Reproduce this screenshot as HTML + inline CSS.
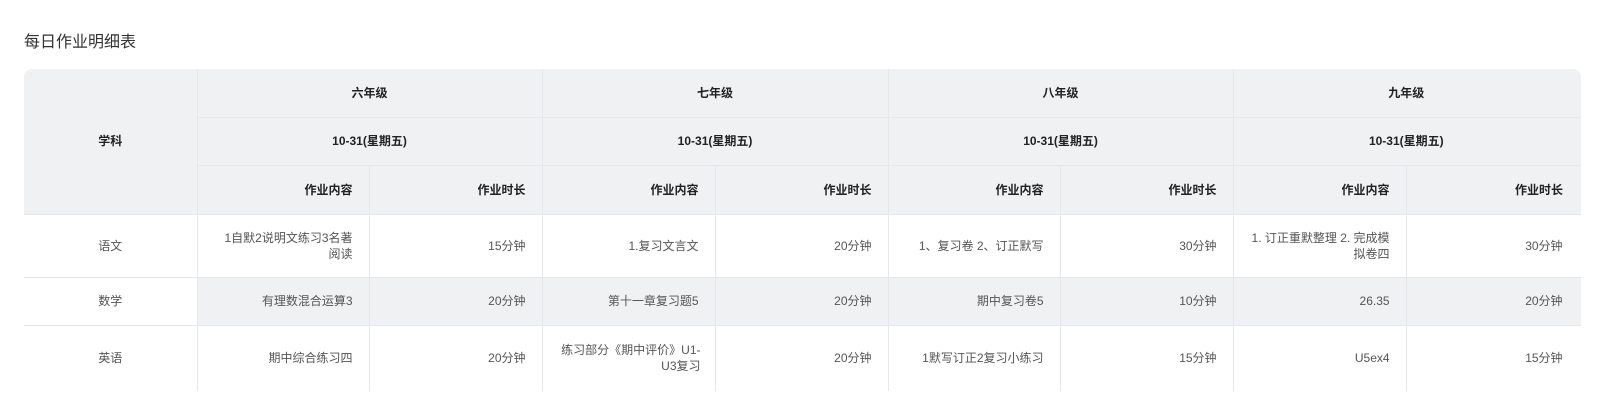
<!DOCTYPE html>
<html><head><meta charset="utf-8"><style>
body{margin:0;background:#fff;font-family:"Liberation Sans","Noto Sans CJK SC",sans-serif;width:1605px;height:416px;overflow:hidden;position:relative}
.title{position:absolute;left:24px;top:28px;font-size:16px;color:#333}
.wrap{position:absolute;left:24px;top:69px;width:1557px;height:322px;background:#f0f1f3;border-radius:8px 8px 0 0;overflow:hidden}
table{border-collapse:collapse;table-layout:fixed;position:absolute;left:0;top:0;font-size:12px;width:1557px}
td,th{padding:0 16px;border:1px solid #e6e7ea;line-height:16px}
th{font-weight:bold;color:#222;background:#f0f1f3;text-align:center}
th.r{text-align:right}
td{color:#555;text-align:right;background:#fff}
td.c{text-align:center}
tr.g td{background:#f0f1f3}
tr.g td.c{background:#fff}
table tr:first-child th{border-top:none}
table th:first-child,table td:first-child{border-left:none}
.last{padding-right:18px}
th.last{border-right:none}
.nw{padding-left:12px;padding-right:14px}
</style></head><body>
<div class="title">每日作业明细表</div>
<div class="wrap">
<table>
<colgroup><col style="width:173px"><col style="width:172px"><col style="width:173px"><col style="width:173px"><col style="width:173px"><col style="width:172px"><col style="width:173px"><col style="width:173px"><col style="width:175px"></colgroup>
<tr style="height:48px"><th rowspan="3">学科</th><th colspan="2">六年级</th><th colspan="2">七年级</th><th colspan="2">八年级</th><th colspan="2" class="last">九年级</th></tr>
<tr style="height:48px"><th colspan="2">10-31(星期五)</th><th colspan="2">10-31(星期五)</th><th colspan="2">10-31(星期五)</th><th colspan="2" class="last">10-31(星期五)</th></tr>
<tr style="height:49px"><th class="r">作业内容</th><th class="r">作业时长</th><th class="r">作业内容</th><th class="r">作业时长</th><th class="r">作业内容</th><th class="r">作业时长</th><th class="r">作业内容</th><th class="r last">作业时长</th></tr>
<tr style="height:63px"><td class="c">语文</td><td>1自默2说明文练习3名著阅读</td><td>15分钟</td><td>1.复习文言文</td><td>20分钟</td><td>1、复习卷 2、订正默写</td><td>30分钟</td><td>1. 订正重默整理 2. 完成模拟卷四</td><td class="last">30分钟</td></tr>
<tr class="g" style="height:48px"><td class="c">数学</td><td>有理数混合运算3</td><td>20分钟</td><td>第十一章复习题5</td><td>20分钟</td><td>期中复习卷5</td><td>10分钟</td><td>26.35</td><td class="last">20分钟</td></tr>
<tr style="height:66px"><td class="c">英语</td><td>期中综合练习四</td><td>20分钟</td><td class="nw">练习部分《期中评价》U1-U3复习</td><td>20分钟</td><td>1默写订正2复习小练习</td><td>15分钟</td><td>U5ex4</td><td class="last">15分钟</td></tr>
</table>
</div>
</body></html>
